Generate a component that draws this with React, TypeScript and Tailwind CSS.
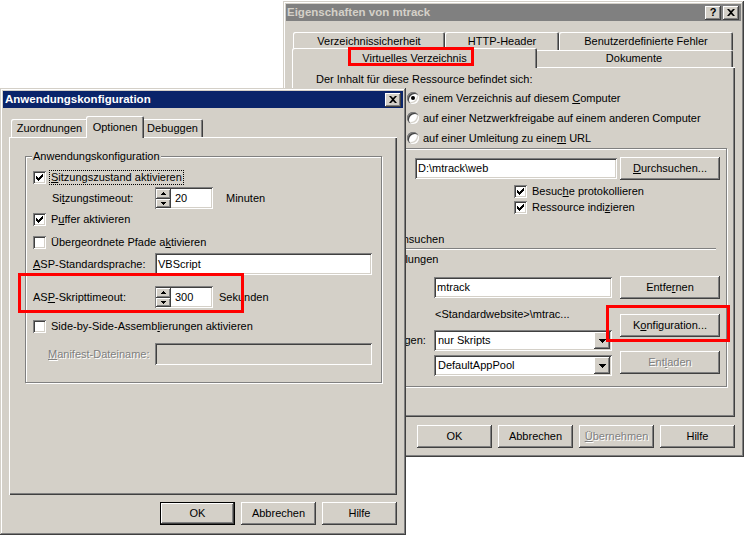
import React from 'react';

const raised = 'shadow-[inset_-1px_-1px_#404040,inset_1px_1px_#ffffff,inset_-2px_-2px_#808080]';
const defRaised = 'shadow-[inset_0_0_0_1px_#000000,inset_-2px_-2px_#404040,inset_2px_2px_#ffffff,inset_-3px_-3px_#808080]';
const sunken = 'shadow-[inset_1px_1px_#808080,inset_-1px_-1px_#ffffff,inset_2px_2px_#404040,inset_-2px_-2px_#d4d0c8]';
const windowBevel = 'shadow-[inset_-1px_-1px_#404040,inset_1px_1px_#d4d0c8,inset_-2px_-2px_#808080,inset_2px_2px_#ffffff]';
const tabBevel = 'shadow-[inset_1px_1px_#ffffff,inset_-1px_0_#404040,inset_-2px_0_#808080]';
const panelBevel = 'shadow-[inset_1px_1px_#ffffff,inset_-1px_-1px_#404040,inset_-2px_-2px_#808080]';
const etched = 'border border-[#808080] shadow-[inset_1px_1px_#ffffff,1px_1px_#ffffff]';
const disabledText = 'text-[#808080] [text-shadow:1px_1px_0_#ffffff]';

type P = { children?: React.ReactNode; className?: string };

function XGlyph() {
  return (
    <svg width="8" height="7" viewBox="0 0 8 7">
      <path d="M0 0h2l2 2 2-2h2L5 3.5 8 7H6L4 5 2 7H0l3-3.5z" fill="#000" />
    </svg>
  );
}

function TitleBtn({ children }: P) {
  return (
    <div className={`w-[16px] h-[14px] bg-[#d4d0c8] ${raised} flex items-center justify-center font-bold text-[11px] leading-[11px] text-black`}>
      {children}
    </div>
  );
}

function Tab({ children, className = '' }: P) {
  return (
    <div className={`shrink-0 flex items-center justify-center bg-[#d4d0c8] rounded-t-[2px] ${tabBevel} ${className}`}>
      {children}
    </div>
  );
}

function Btn({ children, className = '', disabled = false, def = false }: P & { disabled?: boolean; def?: boolean }) {
  return (
    <div className={`h-[23px] shrink-0 flex items-center justify-center bg-[#d4d0c8] ${def ? defRaised : raised} ${disabled ? disabledText : ''} ${className}`}>
      {children}
    </div>
  );
}

function Check({ checked = false }: { checked?: boolean }) {
  return (
    <div className={`w-[13px] h-[13px] shrink-0 bg-white ${sunken} flex items-center justify-center`}>
      {checked && (
        <svg width="7" height="7" viewBox="0 0 7 7">
          <path d="M0 2h1v3H0z M1 3h1v3H1z M2 4h1v3H2z M3 3h1v3H3z M4 2h1v3H4z M5 1h1v3H5z M6 0h1v3H6z" fill="#000" />
        </svg>
      )}
    </div>
  );
}

function CheckRow({ checked = false, focus = false, children, className = '' }: P & { checked?: boolean; focus?: boolean }) {
  return (
    <div className={`flex items-center h-[13px] ${className}`}>
      <Check checked={checked} />
      <span className={`ml-[3px] px-[1px] border whitespace-nowrap ${focus ? 'border-dotted border-black' : 'border-transparent'}`}>
        {children}
      </span>
    </div>
  );
}

function Radio({ checked = false }: { checked?: boolean }) {
  return (
    <div className={`w-[12px] h-[12px] shrink-0 rounded-full bg-white shadow-[inset_1px_1px_#808080,inset_2px_2px_#404040,inset_-1px_-1px_#ffffff,inset_-2px_-2px_#d4d0c8] flex items-center justify-center`}>
      {checked && <div className="w-[4px] h-[4px] rounded-full bg-black" />}
    </div>
  );
}

function UpArrow() {
  return (
    <svg width="5" height="3" viewBox="0 0 5 3">
      <path d="M2 0h1v1h1v1h1v1H0V2h1V1h1z" fill="#000" />
    </svg>
  );
}
function DownArrow({ w = 5 }: { w?: number }) {
  if (w === 7)
    return (
      <svg width="7" height="4" viewBox="0 0 7 4">
        <path d="M0 0h7v1H6v1H5v1H4v1H3V3H2V2H1V1H0z" fill="#000" />
      </svg>
    );
  return (
    <svg width="5" height="3" viewBox="0 0 5 3">
      <path d="M0 0h5v1H4v1H3v1H2V2H1V1H0z" fill="#000" />
    </svg>
  );
}

function Spin({ value }: { value: string }) {
  return (
    <div className={`w-[58px] h-[22px] shrink-0 bg-white ${sunken} flex items-center pl-[1px]`}>
      <div className="flex flex-col w-[15px] h-[19px]">
        <div className={`h-[10px] bg-[#d4d0c8] ${raised} flex items-center justify-center`}>
          <UpArrow />
        </div>
        <div className={`h-[9px] bg-[#d4d0c8] ${raised} flex items-center justify-center`}>
          <DownArrow />
        </div>
      </div>
      <span className="ml-[4px]">{value}</span>
    </div>
  );
}

function Field({ children, className = '', disabled = false }: P & { disabled?: boolean }) {
  return (
    <div className={`shrink-0 ${disabled ? 'bg-[#d4d0c8]' : 'bg-white'} ${sunken} flex items-center pl-[3px] whitespace-nowrap ${className}`}>
      {children}
    </div>
  );
}

function Combo({ value }: { value: string }) {
  return (
    <div className={`w-[178px] h-[21px] shrink-0 bg-white ${sunken} flex items-center pl-[4px] pr-[2px]`}>
      <span className="flex-1 whitespace-nowrap">{value}</span>
      <div className={`w-[16px] h-[17px] bg-[#d4d0c8] ${raised} flex items-center justify-center`}>
        <DownArrow w={7} />
      </div>
    </div>
  );
}

function RedBox({ className = '' }: P) {
  return <div className={`absolute border-[3px] border-[#ff0000] pointer-events-none ${className}`} />;
}

function BackWindow() {
  return (
    <div className={`absolute left-[283px] top-[1px] w-[461px] h-[456px] bg-[#d4d0c8] p-[3px] flex flex-col ${windowBevel}`}>
      <div className="h-[17px] shrink-0 bg-[#808080] flex items-center pl-[1px] pr-[2px]">
        <span className="font-bold text-[11.5px] text-[#d4d0c8] whitespace-nowrap">Eigenschaften von mtrack</span>
        <div className="ml-auto flex gap-[2px]">
          <TitleBtn>?</TitleBtn>
          <TitleBtn>
            <XGlyph />
          </TitleBtn>
        </div>
      </div>
      <div className="flex flex-col px-[6px]">
        <div className="mt-[11px] flex h-[18px] pl-[1px]">
          <Tab className="w-[152px] h-[18px]">Verzeichnissicherheit</Tab>
          <Tab className="w-[114px] h-[18px]">HTTP-Header</Tab>
          <Tab className="w-[174px] h-[18px]">Benutzerdefinierte Fehler</Tab>
        </div>
        <div className="flex items-end h-[17px] pl-[2px]">
          <Tab className="relative z-10 w-[245px] h-[20px] -mx-[2px] -mb-[1px]">
            <span>Virtuelles Verzeichnis</span>
            <RedBox className="left-[56px] top-[-1px] w-[126px] h-[19px]" />
          </Tab>
          <Tab className="w-[198px] h-[17px]">Dokumente</Tab>
        </div>
        <div className={`h-[350px] bg-[#d4d0c8] ${panelBevel} flex flex-col`}>
          <div className="mt-[5px] ml-[24px] h-[14px] flex items-center whitespace-nowrap">
            Der Inhalt für diese Ressource befindet sich:
          </div>
          <div className="ml-[115px] flex flex-col whitespace-nowrap">
            <div className="mt-[5px] h-[14px] flex items-center">
              <Radio checked />
              <span className="ml-[4px]">
                einem Verzeichnis auf diesem <u>C</u>omputer
              </span>
            </div>
            <div className="mt-[6px] h-[14px] flex items-center">
              <Radio />
              <span className="ml-[4px]">auf einer Netzwerkfreigabe auf einem anderen Computer</span>
            </div>
            <div className="mt-[6px] h-[14px] flex items-center">
              <Radio />
              <span className="ml-[4px]">
                auf einer Umleitung zu eine<u>m</u> URL
              </span>
            </div>
          </div>
          <div className={`mt-[3px] mx-[8px] h-[239px] ${etched} flex flex-col`}>
            <div className="mt-[8px] h-[23px] flex items-center">
              <span className="w-[114px] shrink-0 pl-[8px] whitespace-nowrap">Lokaler Pfad:</span>
              <Field className="w-[202px] h-[21px]">D:\mtrack\web</Field>
              <Btn className="ml-[3px] w-[100px]">
                <span>
                  <u>D</u>urchsuchen...
                </span>
              </Btn>
            </div>
            <div className="mt-[5px] flex">
              <div className="ml-[3px] w-[210px] flex flex-col gap-[3px]">
                <CheckRow>Skriptzugriff</CheckRow>
                <CheckRow checked>Lesen</CheckRow>
                <CheckRow>Schreiben</CheckRow>
                <CheckRow>Verzeichnis durchsuchen</CheckRow>
              </div>
              <div className="flex flex-col gap-[3px]">
                <CheckRow checked>
                  Besuc<u>h</u>e protokollieren
                </CheckRow>
                <CheckRow checked>
                  Ressource indi<u>z</u>ieren
                </CheckRow>
              </div>
            </div>
            <div className="mt-[2px] ml-[8px] mr-[10px] h-[2px] border-t border-[#808080] bg-white" />
            <div className="mt-[2px] h-[14px] pl-[9px] flex items-center whitespace-nowrap">Anwendungseinstellungen</div>
            <div className="mt-[10px] flex">
              <div className="flex flex-col pl-[8px]">
                <div className="h-[23px] flex items-center">
                  <span className="w-[125px] shrink-0 whitespace-nowrap">Anwendungsname:</span>
                  <Field className="w-[178px] h-[21px]">mtrack</Field>
                </div>
                <div className="mt-[8px] h-[14px] flex items-center whitespace-nowrap">
                  <span className="w-[125px] shrink-0">Startpunkt:</span>
                  <span className="ml-[1px]">&lt;Standardwebsite&gt;\mtrac...</span>
                </div>
                <div className="mt-[9px] h-[21px] flex items-center">
                  <span className="w-[125px] shrink-0 whitespace-nowrap">Ausführberechtigungen:</span>
                  <Combo value="nur Skripts" />
                </div>
                <div className="mt-[4px] h-[21px] flex items-center">
                  <span className="w-[125px] shrink-0 whitespace-nowrap">Anwendungspool:</span>
                  <Combo value="DefaultAppPool" />
                </div>
              </div>
              <div className="ml-[8px] flex flex-col">
                <Btn className="w-[100px]">
                  <span>
                    Entfe<u>r</u>nen
                  </span>
                </Btn>
                <div className="relative mt-[15px]">
                  <Btn className="w-[100px]">
                    <span>
                      K<u>o</u>nfiguration...
                    </span>
                  </Btn>
                  <RedBox className="left-[-14px] top-[-9px] w-[124px] h-[37px]" />
                </div>
                <Btn disabled className="mt-[14px] w-[100px]">
                  <span>
                    Ent<u>l</u>aden
                  </span>
                </Btn>
              </div>
            </div>
          </div>
        </div>
        <div className="mt-[8px] flex justify-end gap-[6px]">
          <Btn className="w-[75px]">OK</Btn>
          <Btn className="w-[75px]">Abbrechen</Btn>
          <Btn disabled className="w-[75px]">
            <span>
              <u>Ü</u>bernehmen
            </span>
          </Btn>
          <Btn className="w-[75px]">Hilfe</Btn>
        </div>
      </div>
    </div>
  );
}

function FrontWindow() {
  return (
    <div className={`absolute left-0 top-[88px] w-[406px] h-[447px] bg-[#d4d0c8] p-[3px] flex flex-col ${windowBevel}`}>
      <div className="h-[17px] shrink-0 bg-[#0a246a] flex items-center pl-[2px] pr-[2px]">
        <span className="font-bold text-[11.5px] text-white whitespace-nowrap">Anwendungskonfiguration</span>
        <div className="ml-auto">
          <TitleBtn>
            <XGlyph />
          </TitleBtn>
        </div>
      </div>
      <div className="flex flex-col px-[6px]">
        <div className="mt-[8px] flex items-end h-[21px] pl-[2px]">
          <Tab className="w-[77px] h-[18px]">Zuordnungen</Tab>
          <Tab className="relative z-10 w-[58px] h-[22px] -mx-[2px] -mb-[1px]">Optionen</Tab>
          <Tab className="w-[61px] h-[18px]">Debuggen</Tab>
        </div>
        <div className={`h-[358px] bg-[#d4d0c8] ${panelBevel} flex flex-col`}>
          <div className={`relative mt-[19px] ml-[16px] mr-[15px] h-[227px] ${etched} flex flex-col pl-[7px]`}>
            <span className="absolute left-[6px] top-[-7px] px-[1px] bg-[#d4d0c8] whitespace-nowrap">Anwendungskonfiguration</span>
            <CheckRow checked focus className="mt-[12px] h-[16px]">
              <u>S</u>itzungszustand aktivieren
            </CheckRow>
            <div className="mt-[2px] h-[22px] flex items-center whitespace-nowrap">
              <span className="w-[122px] shrink-0 pl-[19px]">
                Si<u>t</u>zungstimeout:
              </span>
              <Spin value="20" />
              <span className="ml-[13px]">Minuten</span>
            </div>
            <CheckRow checked className="mt-[4px]">
              P<u>u</u>ffer aktivieren
            </CheckRow>
            <CheckRow className="mt-[10px]">
              Übergeordnete Pfade a<u>k</u>tivieren
            </CheckRow>
            <div className="mt-[4px] h-[22px] flex items-center whitespace-nowrap">
              <span className="w-[122px] shrink-0">
                <u>A</u>SP-Standardsprache:
              </span>
              <Field className="w-[217px] h-[22px]">VBScript</Field>
            </div>
            <div className="relative mt-[11px] h-[22px] flex items-center whitespace-nowrap">
              <span className="w-[122px] shrink-0">
                AS<u>P</u>-Skripttimeout:
              </span>
              <Spin value="300" />
              <span className="ml-[6px]">Sekunden</span>
              <RedBox className="left-[-15px] top-[-13px] w-[226px] h-[40px]" />
            </div>
            <CheckRow className="mt-[12px]">
              Side-by-Side-Assemb<u>l</u>ierungen aktivieren
            </CheckRow>
            <div className="mt-[10px] h-[22px] flex items-center whitespace-nowrap">
              <span className={`w-[122px] shrink-0 pl-[15px] ${disabledText}`}>
                <u>M</u>anifest-Dateiname:
              </span>
              <Field disabled className="w-[217px] h-[22px]" />
            </div>
          </div>
        </div>
        <div className="mt-[7px] flex justify-end gap-[6px]">
          <Btn def className="w-[75px]">OK</Btn>
          <Btn className="w-[75px]">Abbrechen</Btn>
          <Btn className="w-[75px]">Hilfe</Btn>
        </div>
      </div>
    </div>
  );
}

export default function App() {
  return (
    <div className="relative w-[744px] h-[535px] overflow-hidden bg-white font-['Liberation_Sans',Arial,sans-serif] text-[11px] leading-[13px] text-black">
      <BackWindow />
      <FrontWindow />
    </div>
  );
}
